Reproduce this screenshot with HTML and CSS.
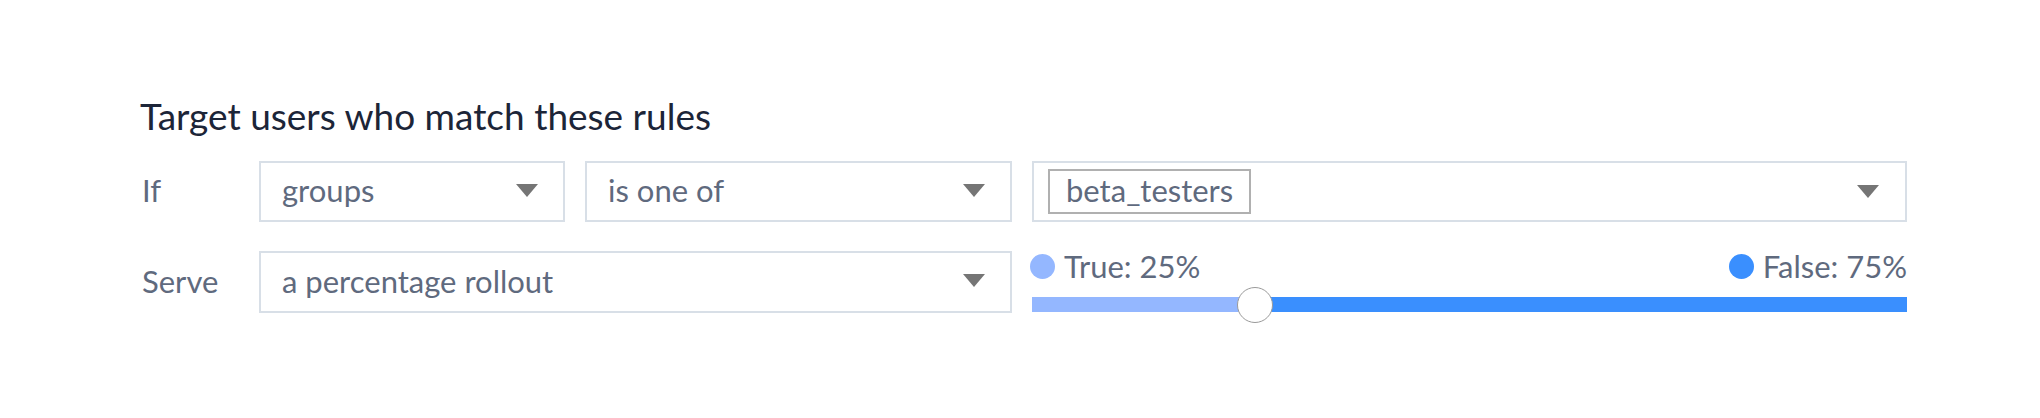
FILE: index.html
```html
<!DOCTYPE html>
<html lang="en">
<head>
<meta charset="utf-8">
<title>Targeting rules</title>
<link rel="stylesheet" href="styles.css">
</head>
<body>
<section class="rules">
  <h2 class="title">Target users who match these rules</h2>
  <div class="grid">
    <div class="label">If</div>
    <div class="select"><span class="value">groups</span><span class="caret"></span></div>
    <div class="select"><span class="value">is one of</span><span class="caret"></span></div>
    <div class="select multi"><span class="tag">beta_testers</span><span class="caret"></span></div>

    <div class="label">Serve</div>
    <div class="select wide"><span class="value">a percentage rollout</span><span class="caret"></span></div>
    <div class="rollout">
      <div class="legend">
        <span class="item"><span class="dot light"></span>True: 25%</span>
        <span class="item"><span class="dot dark"></span>False: 75%</span>
      </div>
      <div class="track">
        <div class="fill" style="width:25.5%"></div>
        <div class="thumb" style="left:25.5%"></div>
      </div>
    </div>
  </div>
</section>
</body>
</html>
```

FILE: styles.css
```css
* { box-sizing: border-box; }
html, body { margin: 0; padding: 0; background: #ffffff; }
body {
  font-family: Lato, "Noto Sans", sans-serif;
  color: #5f6a7e;
  width: 2040px;
  height: 418px;
  overflow: hidden;
}
.rules {
  padding: 93px 0 0 140px;
}
.title {
  margin: 0;
  font-size: 37px;
  font-weight: 400;
  color: #1c2538;
  line-height: 46px;
}
.grid {
  margin-top: 22px;
  display: grid;
  grid-template-columns: 99px 306px 427px 875px;
  grid-template-rows: 61px 62px;
  column-gap: 20px;
  row-gap: 29px;
}
.label {
  display: flex;
  align-items: center;
  font-size: 31px;
  color: #5f6a7e;
  padding: 0 0 3px 2px;
}
.select {
  display: flex;
  align-items: center;
  justify-content: space-between;
  border: 2px solid #d8dfe7;
  padding: 0 25px 3px 21px;
  font-size: 31px;
  color: #5f6a7e;
}
.select.wide { grid-column: 2 / span 2; }
.select.multi { padding: 0 26px 0 14px; }
.caret {
  width: 0;
  height: 0;
  border-left: 11px solid transparent;
  border-right: 11px solid transparent;
  border-top: 13px solid #757575;
}
.tag {
  border: 2px solid #b0b0b0;
  padding: 0 16px 3px;
  height: 45px;
  display: flex;
  align-items: center;
  font-size: 31px;
  color: #5f6a7e;
}
.rollout {
  display: flex;
  flex-direction: column;
}
.legend {
  display: flex;
  justify-content: space-between;
  height: 30px;
  align-items: center;
  font-size: 31px;
  color: #5f6a7e;
}
.item { display: flex; align-items: center; gap: 9px; }
.item:first-child { margin-left: -2px; }
.dot {
  width: 25px;
  height: 25px;
  border-radius: 50%;
  display: inline-block;
}
.dot.light { background: #94b7ff; }
.dot.dark { background: #3a8ffe; }
.track {
  position: relative;
  margin-top: 16px;
  height: 15px;
  background: #3a8ffe;
}
.fill {
  height: 100%;
  background: #94b7ff;
}
.thumb {
  position: absolute;
  top: 50%;
  width: 36px;
  height: 36px;
  margin: -18px 0 0 -18px;
  border-radius: 50%;
  background: #ffffff;
  border: 1.5px solid #9a9a9a;
}
```
